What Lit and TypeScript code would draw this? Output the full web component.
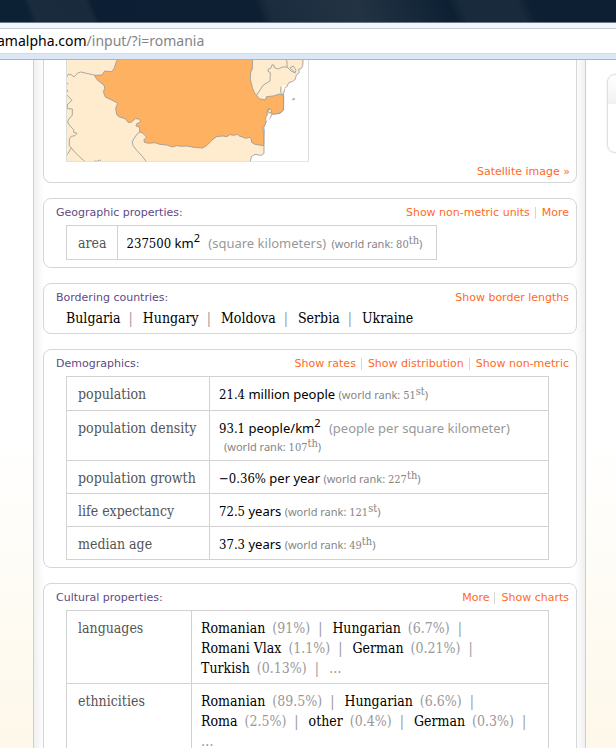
import { LitElement, html, css, svg, TemplateResult } from "lit";
import { customElement, property } from "lit/decorators.js";

const shared = css`
  *,
  *::before {
    box-sizing: border-box;
  }
  a {
    color: #ff6a22;
    text-decoration: none;
  }
`;

@customElement("region-map")
class RegionMap extends LitElement {
  static styles = css`
    :host {
      display: block;
      width: 243px;
    }
    svg {
      display: block;
      width: 100%;
    }
    .land {
      fill: #ffebcd;
    }
    .focus {
      fill: #ffb162;
    }
    .sea {
      fill: #fff;
    }
    .land,
    .focus,
    .line {
      stroke: #999;
      stroke-width: 2.5;
      stroke-linejoin: round;
    }
    .line {
      fill: none;
    }
    .frame {
      fill: none;
      stroke: #dcdcdc;
      stroke-width: 3;
    }
  `;

  render() {
    return html`<svg viewBox="78 30 729 307" role="img" aria-label="Map of Romania">
      ${svg`
        <rect class="sea" x="79" y="20" width="727" height="330"></rect>
        <path class="land" d="M70 20H790L788 48L783 56L776 58L778 68L769 75L766 88L757 95L746 98L742 108L734 116L730 136L731 150L731 180L720 190L697 192L690 205L678 214L672 232L672 310L664 316L645 313L634 320L631 335L634 350H70Z"></path>
        <path class="focus" d="M236 20L228 38L222 56L214 65L194 63L186 75L163 76L171 89L193 107L194 116L190 125L196 141L215 150L225 155L233 160L227 175L230 193L236 200L256 206L264 217L274 217L286 206L298 207L302 216L290 221L288 228L299 232L299 246L307 249L317 258L319 262L312 269L313 277L326 280L344 278L359 283L380 285L397 291L410 287L424 289L440 288L462 292L488 294L501 286L516 270L530 260L548 258L561 260L569 254L582 256L592 253L598 258L618 265L628 262L634 267L635 277L645 283L671 287L672 239L666 235L676 222L679 213L677 203L681 196L682 181L690 176L694 181L694 190L703 193L720 189L730 180L731 136L719 132L700 138L679 140L677 150L657 146L651 137L643 128L637 112L631 88L632 67L637 57L638 20Z"></path>
        <path class="line" d="M650 135L660 120L670 105L690 93L691 68L684 64L685 57L692 55L696 45L702 45L703 53L715 57L727 51L741 51L753 63L766 69M737 28L741 34L741 51M750 53L760 48L768 61L765 68L757 60ZM690 176L684 178L685 187L694 189M78 83L86 72L95 75L102 81L112 70L122 66L140 70L163 75M80 98L85 103M80 118L85 126M80 135L96 151L82 164V176L97 177V195L84 211V219L92 230L101 239L101 247L111 250L105 257L93 259L88 267V286L94 294L104 306L118 320L136 336M94 294L84 310L80 315M299 247L292 251L281 267L277 275L279 287L290 301L307 319L320 336M163 333L172 334L178 330L184 334M757 148L763 145L764 148L758 150ZM723 110L722 128L729 134"></path>
        <path class="sea" d="M681 199L688 193L692 196L689 203L685 212L678 212ZM726 107L733 105L734 116L727 124Z"></path>
        <path class="frame" d="M79.500 20V335.500H805.500V20"></path>
      `}
    </svg>`;
  }
}

@customElement("result-pod")
class ResultPod extends LitElement {
  @property() heading = "";
  @property({ attribute: false }) actions: string[] = [];

  static styles = [
    shared,
    css`
      :host {
        display: block;
        box-sizing: border-box;
        padding: 6px 7px 7px 12px;
        background: #fff;
        border: 1px solid #d6d6d6;
        border-radius: 8px;
      }
      .head {
        display: flex;
        justify-content: space-between;
        height: 16px;
        font: 11px/16px "DejaVu Sans", sans-serif;
      }
      .title {
        margin: 0;
        font: inherit;
        color: #5e4a84;
      }
      .actions {
        display: flex;
        align-items: center;
      }
      .actions a + a {
        margin-left: 5px;
        padding-left: 6px;
        border-left: 1px solid #d6d6d6;
        line-height: 12px;
      }
      .body {
        padding: 4px 20px 0 10px;
      }
    `,
  ];

  render() {
    return html`<div class="head">
        <h2 class="title">${this.heading}</h2>
        <nav class="actions">${this.actions.map((a) => html`<a href="#">${a}</a>`)}</nav>
      </div>
      <div class="body"><slot></slot></div>`;
  }
}

const rank = (n: string, suffix: string) =>
  html`<span class="rank">(world rank: <span class="num">${n}<sup>${suffix}</sup></span>)</span>`;

const demographics: [string, TemplateResult][] = [
  ["population", html`<span class="num">21.4</span> million people ${rank("51", "st")}`],
  [
    "population density",
    html`<span class="num">93.1</span> people/km<sup>2</sup>
      <span class="unit">(people per square kilometer)</span>
      <div class="second">${rank("107", "th")}</div>`,
  ],
  ["population growth", html`<span class="num">−0.36%</span> per year ${rank("227", "th")}`],
  ["life expectancy", html`<span class="num">72.5</span> years ${rank("121", "st")}`],
  ["median age", html`<span class="num">37.3</span> years ${rank("49", "th")}`],
];

type Share = [string, string];
const cultural: [string, Share[][]][] = [
  [
    "languages",
    [
      [["Romanian", "91%"], ["Hungarian", "6.7%"]],
      [["Romani Vlax", "1.1%"], ["German", "0.21%"]],
      [["Turkish", "0.13%"], ["…", ""]],
    ],
  ],
  [
    "ethnicities",
    [
      [["Romanian", "89.5%"], ["Hungarian", "6.6%"]],
      [["Roma", "2.5%"], ["other", "0.4%"], ["German", "0.3%"]],
      [["…", ""]],
    ],
  ],
];

@customElement("app-root")
class AppRoot extends LitElement {
  static styles = [
    shared,
    css`
      :host {
        display: flex;
        flex-direction: column;
        height: 100vh;
        overflow: hidden;
        font-family: "Noto Sans", sans-serif;
        color: #000;
      }
      .titlebar {
        flex: none;
        height: 23px;
        border-bottom: 1px solid #6b7885;
        background: linear-gradient(
          68deg,
          #0d2134 5%,
          #192b3c 6%,
          #182a3b 15%,
          #0c1e33 16%,
          #0d2033 42%,
          #1b2c3e 44%,
          #233344 58%,
          #0d2033 73%,
          #182a3b 75%,
          #182a3b 84%,
          #0d2033 86%
        );
      }
      .address {
        flex: none;
        display: flex;
        height: 37px;
        padding: 5px 0;
        background: linear-gradient(#f3f6fb 5px, #dce7f5 5px);
        border-bottom: 1px solid #aab4c2;
      }
      .url {
        flex: 1;
        display: flex;
        align-items: center;
        overflow: hidden;
        background: #fff;
        border-top: 1px solid #c3cddb;
        border-bottom: 1px solid #d0d9e6;
        font-size: 14px;
        line-height: 20px;
      }
      .host {
        margin-left: -3px;
      }
      .path {
        color: #858585;
      }
      .page {
        flex: 1;
        min-height: 0;
        display: flex;
        overflow: hidden;
        background: linear-gradient(#fff 55%, #fef8ea);
      }
      .results {
        flex: 1;
        display: flex;
        flex-direction: column;
        gap: 15px;
        margin-left: 33px;
        padding: 0 8px 0 9px;
        border: solid #cfcfcf;
        border-width: 0 1px;
        background: linear-gradient(90deg, #f0f0f0, #fff 10px, #fff calc(100% - 10px), #f0f0f0);
      }
      result-pod,
      .map-pod {
        flex: none;
      }
      .map-pod {
        height: 123px;
        padding: 0 6px 0 22px;
        background: #fff;
        border: 1px solid #d6d6d6;
        border-top: 0;
        border-radius: 0 0 8px 8px;
      }
      .map-link {
        display: block;
        text-align: right;
        font: 11px/20px "DejaVu Sans", sans-serif;
      }
      .side {
        flex: none;
        width: 30px;
        padding: 14px 0 0 21px;
      }
      .card {
        width: 60px;
        height: 79px;
        border: 1px solid #dedede;
        border-radius: 8px;
        background: linear-gradient(#fff, #f1f1f1 29px, #fff 29px);
        box-shadow: 0 0 2px #e4e4e4;
      }
      table {
        border-collapse: collapse;
      }
      .wide {
        width: 100%;
      }
      th,
      td {
        border: 1px solid #d2d2d2;
        font-size: 13px;
        line-height: 20px;
        vertical-align: top;
        text-align: left;
        padding: 7px 9px 5px 9px;
      }
      th {
        padding: 7px 11px 5px 11px;
        font-family: "DejaVu Serif Condensed", "DejaVu Serif", serif;
        font-size: 14px;
        font-weight: 400;
        color: #555;
        white-space: nowrap;
      }
      .area th {
        padding-right: 10px;
      }
      .area td {
        padding-right: 14px;
      }
      .area th,
      .area td,
      .demo tr:first-child > * {
        padding-bottom: 6px;
      }
      .demo th {
        width: 143px;
        padding-right: 8px;
      }
      .culture th {
        width: 125px;
      }
      .num {
        font-family: "DejaVu Serif Condensed", "DejaVu Serif", serif;
        line-height: 0;
      }
      sup {
        font-size: 11px;
        line-height: 0;
        vertical-align: 6px;
      }
      .rank {
        font-size: 11px;
        line-height: 0;
        color: #858585;
      }
      .rank sup {
        vertical-align: 4px;
      }
      .unit {
        color: #999;
        margin: 0 2px 0 5px;
      }
      .second {
        line-height: 17px;
        padding-left: 5px;
      }
      .shares,
      .countries {
        font-family: "DejaVu Serif Condensed", "DejaVu Serif", serif;
        font-size: 14px;
        line-height: 16px;
      }
      .share {
        color: #999;
        margin-left: 3px;
      }
      .bar {
        color: #999;
        margin: 0 6px 0 4px;
      }
      .shares th {
        padding: 7px 11px 5px 11px;
      }
      .shares td {
        padding: 7px 9px 5px 9px;
        font-size: 14px;
      }
      .line {
        white-space: nowrap;
      }
      .dots {
        color: #999;
      }
    `,
  ];

  private shareLine(items: Share[], last: boolean) {
    return html`<div class="line">
      ${items.map(([name, pct], i) => {
        const bar = i < items.length - 1 || !last ? html` <span class="bar">|</span>` : "";
        return pct ? html`${name} <span class="share">(${pct})</span>${bar} ` : html`<span class="dots">${name}</span>`;
      })}
    </div>`;
  }

  render() {
    const countries = ["Bulgaria", "Hungary", "Moldova", "Serbia", "Ukraine"];
    return html`
      <header class="titlebar"></header>
      <div class="address">
        <div class="url"><span class="host">amalpha.com</span><span class="path">/input/?i=romania</span></div>
      </div>
      <div class="page">
        <main class="results">
          <section class="map-pod">
            <region-map></region-map>
            <a class="map-link" href="#">Satellite image »</a>
          </section>
          <result-pod heading="Geographic properties:" .actions=${["Show non-metric units", "More"]}>
            <table class="area">
              <tr>
                <th scope="row">area</th>
                <td>
                  <span class="num">237500</span> km<sup>2</sup>
                  <span class="unit">(square kilometers)</span> ${rank("80", "th")}
                </td>
              </tr>
            </table>
          </result-pod>
          <result-pod heading="Bordering countries:" .actions=${["Show border lengths"]}>
            <div class="countries">
              ${countries.map((c, i) => html`${i ? html`<span class="bar">|</span> ` : ""}${c} `)}
            </div>
          </result-pod>
          <result-pod
            heading="Demographics:"
            .actions=${["Show rates", "Show distribution", "Show non-metric"]}
          >
            <table class="wide demo">
              ${demographics.map(([k, v]) => html`<tr><th scope="row">${k}</th><td>${v}</td></tr>`)}
            </table>
          </result-pod>
          <result-pod heading="Cultural properties:" .actions=${["More", "Show charts"]}>
            <table class="wide culture shares">
              ${cultural.map(
                ([k, lines]) => html`<tr>
                  <th scope="row">${k}</th>
                  <td>${lines.map((l, i) => this.shareLine(l, i === lines.length - 1))}</td>
                </tr>`
              )}
            </table>
          </result-pod>
        </main>
        <aside class="side"><div class="card"></div></aside>
      </div>
    `;
  }
}
